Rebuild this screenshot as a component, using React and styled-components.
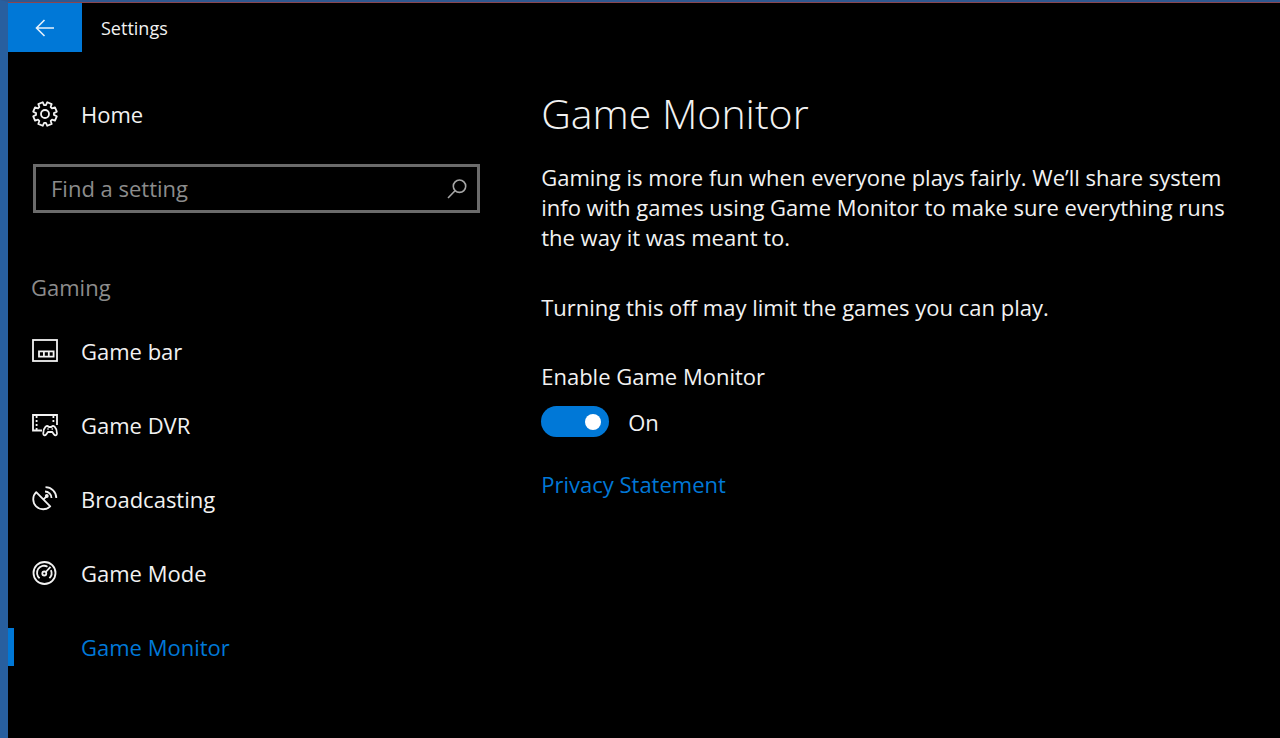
import React, { useState } from 'react';
import styled, { createGlobalStyle } from 'styled-components';

const navItems = [
  { name: 'Game bar', icon: 'bar' },
  { name: 'Game DVR', icon: 'dvr' },
  { name: 'Broadcasting', icon: 'dish' },
  { name: 'Game Mode', icon: 'gauge' },
  { name: 'Game Monitor', icon: null },
];

// outline of a cog with eight square teeth, centred on 13,13
const gearPath = () => {
  const points = [];
  for (let i = 0; i < 8; i++) {
    const mid = (i * Math.PI) / 4 + Math.PI / 8;
    [
      [-0.29, 9],
      [-0.2, 12],
      [0.2, 12],
      [0.29, 9],
    ].forEach(([turn, r]) => {
      const x = 13 + r * Math.cos(mid + turn);
      const y = 13 + r * Math.sin(mid + turn);
      points.push(`${x.toFixed(2)} ${y.toFixed(2)}`);
    });
  }
  return `M${points.join('L')}Z`;
};

const icons = {
  gear: (
    <>
      <path d={gearPath()} strokeLinejoin="round" />
      <circle cx="13" cy="13" r="4" />
    </>
  ),
  bar: (
    <>
      <rect x="1" y="2" width="24" height="21" />
      <path d="M7 13.3h14.6v5.4H7zM11.9 13.3v5.4M16.8 13.3v5.4" />
    </>
  ),
  dvr: (
    <>
      <path d="M10 18.5H1V3h24v10" />
      <path d="M4.6 4v14M21.4 4v8" strokeDasharray="2 2" />
      <path
        d="M13.6 14.6c1.2-.9 2.4-.6 3.2.4h2.6c.8-1 2-1.3 3.2-.4 1.3 1.3 2.4 5 2.3 7.3-.2 1.8-2 1.7-2.9.5l-1.7-2.4h-4.4l-1.700 2.400c-.9 1.200-2.700 1.300-2.900-.5-.1-2.300 1-6 2.300-7.300z"
        strokeLinejoin="round"
      />
      <path d="M15.5 17h1M19.7 17h1" />
    </>
  ),
  dish: (
    <>
      <path d="M4.2 6.200a9.600 9.600 0 0 0 14 14.200z" strokeLinejoin="round" />
      <path d="M11.5 13.3l3-3" />
      <circle cx="14.8" cy="10" r="1" fill="currentColor" />
      <path d="M13 5.5a6.5 6.5 0 0 1 6.5 6.5M13.5 1.2A10.8 10.8 0 0 1 24.3 12" />
    </>
  ),
  gauge: (
    <>
      <circle cx="12.5" cy="13" r="11" />
      <path d="M7.6 18.2A7 7 0 0 1 15.5 6.7M18.9 10.2a7 7 0 0 1-1.5 8" />
      <circle cx="12.3" cy="13.5" r="2" />
      <path d="M13.8 12l4.7-5.2" />
    </>
  ),
};

const Icon = ({ name }) => (
  <IconSvg viewBox="0 0 26 26" aria-hidden="true">
    {icons[name]}
  </IconSvg>
);

const App = () => {
  const [query, setQuery] = useState('');
  const [enabled, setEnabled] = useState(true);
  const [page, setPage] = useState('Game Monitor');

  return (
    <Window>
      <GlobalStyle />
      <TitleBar>
        <BackButton aria-label="Back">
          <svg width="20" height="18" viewBox="0 0 20 18" aria-hidden="true">
            <path d="M19 9H1.5M9.500 1L1.500 9l8 8" />
          </svg>
        </BackButton>
        <Title>Settings</Title>
      </TitleBar>
      <Columns>
        <Sidebar>
          <HomeLink href="#home">
            <Icon name="gear" />
            Home
          </HomeLink>
          <SearchBox>
            <input
              type="text"
              aria-label="Find a setting"
              placeholder="Find a setting"
              value={query}
              onChange={(e) => setQuery(e.target.value)}
            />
            <svg width="20" height="20" viewBox="0 0 20 20" aria-hidden="true">
              <circle cx="12.5" cy="7.2" r="6.2" />
              <path d="M8 11.8L1 19" />
            </svg>
          </SearchBox>
          <GroupName>Gaming</GroupName>
          <nav>
            {navItems.map(({ name, icon }) => (
              <NavLink
                key={name}
                href="#gaming"
                $active={name === page}
                aria-current={name === page ? 'page' : undefined}
                onClick={() => setPage(name)}
              >
                <Icon name={icon} />
                {name}
              </NavLink>
            ))}
          </nav>
        </Sidebar>
        <Content>
          <h1>Game Monitor</h1>
          <p>
            Gaming is more fun when everyone plays fairly. We’ll share system
            info with games using Game Monitor to make sure everything runs the
            way it was meant to.
          </p>
          <p>Turning this off may limit the games you can play.</p>
          <ToggleLabel htmlFor="monitor">Enable Game Monitor</ToggleLabel>
          <ToggleRow>
            <Toggle
              id="monitor"
              type="checkbox"
              role="switch"
              checked={enabled}
              onChange={(e) => setEnabled(e.target.checked)}
            />
            <span>{enabled ? 'On' : 'Off'}</span>
          </ToggleRow>
          <TextLink href="#privacy">Privacy Statement</TextLink>
        </Content>
      </Columns>
    </Window>
  );
};

const GlobalStyle = createGlobalStyle`
  * {
    box-sizing: border-box;
  }
  body {
    margin: 0;
    background: #000;
    color: #f2f2f2;
    font-family: 'Open Sans', 'Noto Sans', sans-serif;
    font-size: 22px;
    line-height: 30px;
  }
  a {
    color: inherit;
    text-decoration: none;
  }
`;

const Window = styled.div`
  min-height: 100vh;
  border-left: 8px solid #285f9f;
  border-top: 2px solid #2f5890;
`;

const TitleBar = styled.header`
  display: flex;
  align-items: center;
  border-top: 1px solid #8a4650;
`;

const BackButton = styled.button`
  display: flex;
  align-items: center;
  justify-content: center;
  width: 74px;
  height: 49px;
  padding: 0;
  border: none;
  background: #0078d7;
  cursor: pointer;
  svg {
    fill: none;
    stroke: #e6f1fb;
    stroke-width: 1.6;
  }
`;

const Title = styled.span`
  padding-left: 19px;
  font-size: 18px;
`;

const Columns = styled.div`
  display: grid;
  grid-template-columns: minmax(320px, 5fr) 8fr;
`;

const Sidebar = styled.aside`
  padding-top: 37px;
`;

const IconSvg = styled.svg`
  flex: none;
  width: 26px;
  height: 26px;
  fill: none;
  stroke: currentColor;
  stroke-width: 1.8;
`;

const HomeLink = styled.a`
  display: flex;
  align-items: center;
  gap: 23px;
  height: 50px;
  padding-left: 24px;
`;

const SearchBox = styled.div`
  display: flex;
  align-items: center;
  height: 49px;
  margin: 25px 17px 0 25px;
  padding: 0 10px 0 15px;
  border: 3px solid #6b6b6b;
  input {
    flex: 1;
    min-width: 0;
    padding: 0 0 2px;
    border: none;
    outline: none;
    background: transparent;
    color: #f2f2f2;
    font: inherit;
  }
  input::placeholder {
    color: #8c8c8c;
    opacity: 1;
  }
  svg {
    fill: none;
    stroke: #a6a6a6;
    stroke-width: 1.6;
  }
`;

const GroupName = styled.h2`
  margin: 59px 0 12px;
  padding-left: 23px;
  color: #8c8c8c;
  font-size: 22px;
  font-weight: 400;
`;

const NavLink = styled.a`
  display: flex;
  align-items: center;
  gap: 23px;
  height: 74px;
  padding-left: 24px;
  color: ${({ $active }) => ($active ? '#0078d7' : 'inherit')};
  background: ${({ $active }) =>
    $active
      ? 'linear-gradient(#0078d7, #0078d7) left center / 6px 38px no-repeat'
      : 'none'};
`;

const Content = styled.main`
  padding: 32px 40px 32px 44px;
  h1 {
    margin: 0 0 20px;
    font-size: 41px;
    font-weight: 350;
    line-height: 58px;
  }
  p {
    margin: 0 0 40px;
  }
`;

const ToggleLabel = styled.label`
  display: block;
  margin-top: -1px;
`;

const ToggleRow = styled.div`
  display: flex;
  align-items: center;
  gap: 19px;
  margin: 15px 0 32px;
`;

const Toggle = styled.input`
  appearance: none;
  display: flex;
  align-items: center;
  justify-content: ${({ checked }) => (checked ? 'flex-end' : 'flex-start')};
  width: 68px;
  height: 31px;
  margin: 0;
  padding: 0 8px;
  border-radius: 16px;
  background: ${({ checked }) => (checked ? '#0078d7' : '#333')};
  cursor: pointer;
  &::before {
    content: '';
    width: 16px;
    height: 16px;
    border-radius: 50%;
    background: #fff;
  }
`;

const TextLink = styled.a`
  color: #0078d7;
`;

export default App;
